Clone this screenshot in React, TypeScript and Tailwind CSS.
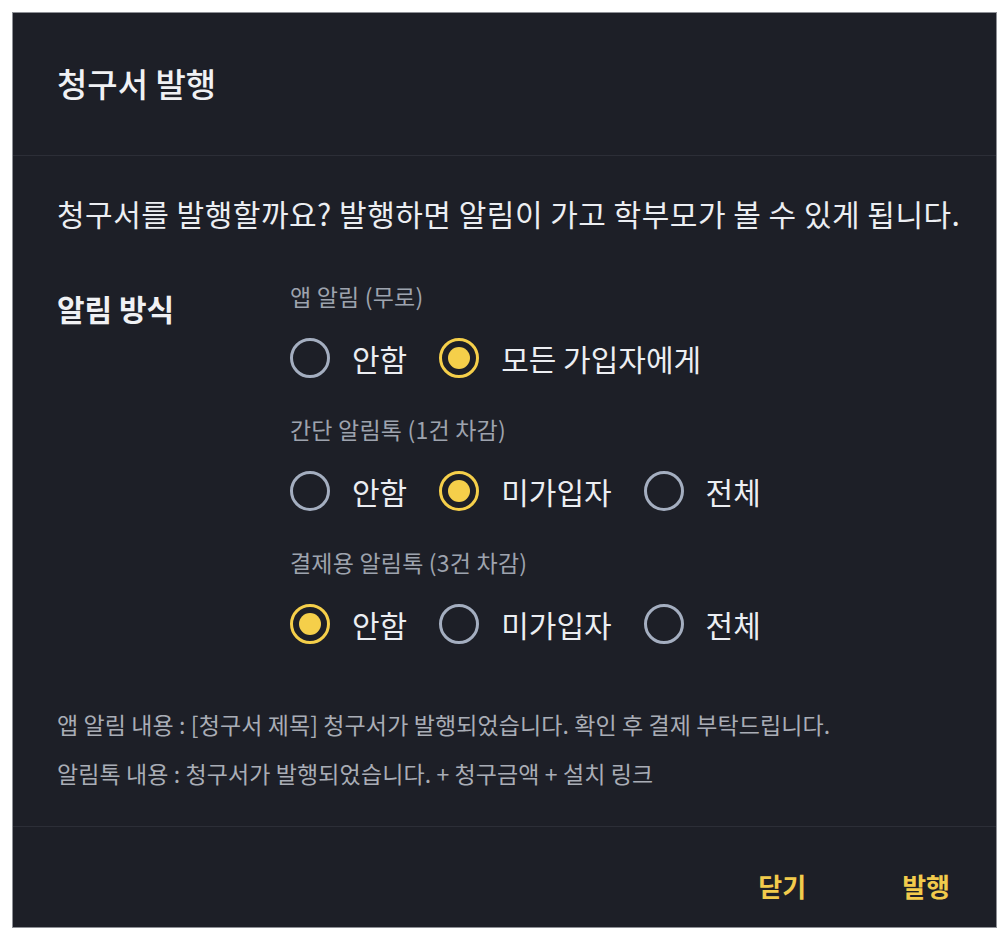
type Opt = { label: string; checked?: boolean };

function Radio({ checked }: { checked?: boolean }) {
  if (checked) {
    return (
      <span className="flex h-10 w-10 shrink-0 items-center justify-center rounded-full border-[3px] border-[#f5cf4a]">
        <span className="h-[22px] w-[22px] rounded-full bg-[#f5cf4a]"></span>
      </span>
    );
  }
  return <span className="h-10 w-10 shrink-0 rounded-full border-[3px] border-[#a4aec0]"></span>;
}

function Group({ title, options }: { title: string; options: Opt[] }) {
  return (
    <div className="flex flex-col">
      <div className="text-[23px] leading-[30px] tracking-[0.2px] text-[#9ea3ae]">{title}</div>
      <div className="mt-[27px] flex items-center gap-[32px]">
        {options.map((o) => (
          <label key={o.label} className="flex items-center gap-[22px]">
            <Radio checked={o.checked} />
            <span className="text-[30px] leading-[40px] text-[#eceef2]">{o.label}</span>
          </label>
        ))}
      </div>
    </div>
  );
}

export default function App() {
  return (
    <div className="min-h-[940px] bg-white p-3 font-['Noto_Sans_CJK_KR','Noto_Sans',sans-serif]">
      <div className="flex w-[985px] flex-col border border-[#8e9096] bg-[#1d1f27]">
        <div className="flex h-[143px] items-center border-b border-[#2c2e37] px-[44px]">
          <h1 className="text-[33px] font-medium text-[#f0f1f4]">청구서 발행</h1>
        </div>

        <div className="flex flex-col pl-[44px] pr-[24px] pt-[37px] pb-[38px]">
          <p className="whitespace-nowrap text-[30px] leading-[40px] tracking-[0.5px] text-[#eceef2]">
            청구서를 발행할까요? 발행하면 알림이 가고 학부모가 볼 수 있게 됩니다.
          </p>

          <div className="mt-[48px] flex">
            <div className="w-[233px] pt-[7px] text-[30px] font-bold leading-[40px] text-[#f0f1f4]">알림 방식</div>
            <div className="flex flex-col gap-[36px]">
              <Group
                title="앱 알림 (무로)"
                options={[{ label: "안함" }, { label: "모든 가입자에게", checked: true }]}
              />
              <Group
                title="간단 알림톡 (1건 차감)"
                options={[{ label: "안함" }, { label: "미가입자", checked: true }, { label: "전체" }]}
              />
              <Group
                title="결제용 알림톡 (3건 차감)"
                options={[{ label: "안함", checked: true }, { label: "미가입자" }, { label: "전체" }]}
              />
            </div>
          </div>

          <div className="mt-[65px] flex flex-col gap-[19px] text-[23px] leading-[30px] tracking-[0.1px] text-[#a9adb6]">
            <p>앱 알림 내용 : [청구서 제목] 청구서가 발행되었습니다. 확인 후 결제 부탁드립니다.</p>
            <p>알림톡 내용 : 청구서가 발행되었습니다. + 청구금액 + 설치 링크</p>
          </div>
        </div>

        <div className="flex h-[101px] items-start justify-end gap-[96px] border-t border-[#2c2e37] px-[46px] pt-[41px]">
          <button className="text-[26px] font-bold leading-[36px] text-[#f2cb4c]">닫기</button>
          <button className="text-[26px] font-bold leading-[36px] text-[#f2cb4c]">발행</button>
        </div>
      </div>
    </div>
  );
}
